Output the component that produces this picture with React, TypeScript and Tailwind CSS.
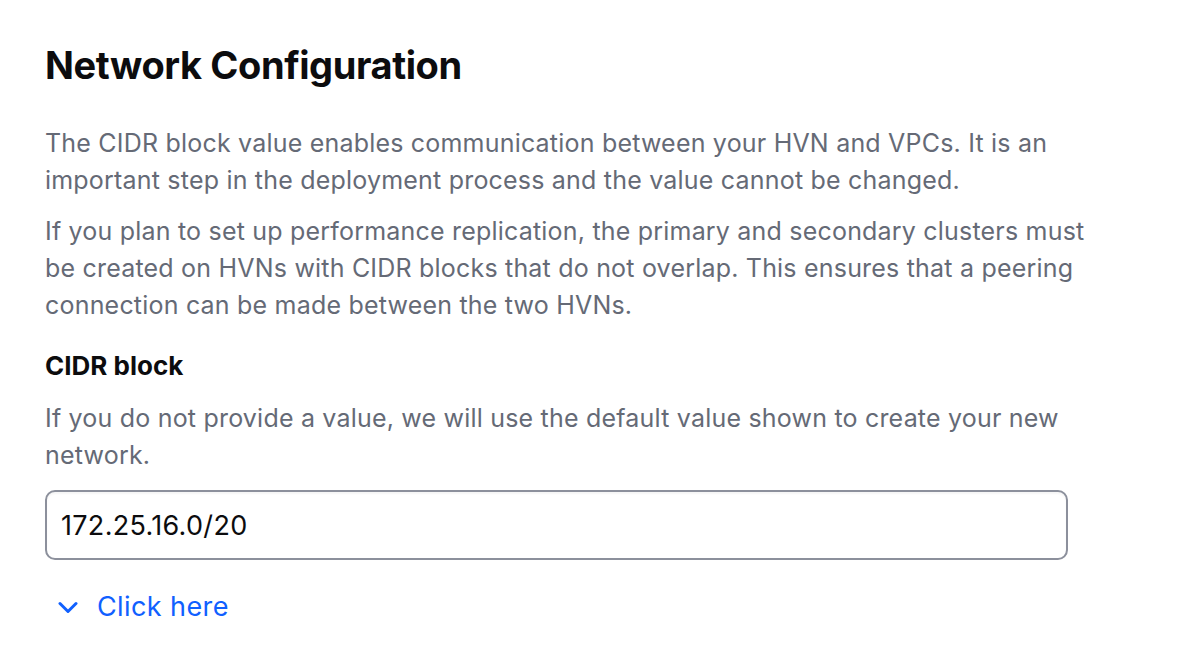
export default function App() {
  return (
    <div className="min-h-screen bg-white px-[45px] pt-[42px] font-['Inter','Liberation_Sans',sans-serif] text-[#0c0c0e]">
      <h1 className="text-[38px] font-bold leading-[46px] tracking-[-0.4px]">Network Configuration</h1>

      <div className="mt-[37px] flex w-[1120px] flex-col gap-[14px] text-[25px] leading-[37px] tracking-[0.2px] text-[#656a76]">
        <p>
          The CIDR block value enables communication between your HVN and VPCs. It is an
          <br />
          important step in the deployment process and the value cannot be changed.
        </p>
        <p>
          If you plan to set up performance replication, the primary and secondary clusters must
          <br />
          be created on HVNs with CIDR blocks that do not overlap. This ensures that a peering
          <br />
          connection can be made between the two HVNs.
        </p>
      </div>

      <h2 className="mt-[25px] text-[26px] font-bold leading-[34px]">CIDR block</h2>
      <p className="mt-[17px] w-[1120px] text-[25px] leading-[37px] tracking-[0.2px] text-[#656a76]">
        If you do not provide a value, we will use the default value shown to create your new
        <br />
        network.
      </p>

      <input
        type="text"
        defaultValue="172.25.16.0/20"
        className="mt-[16px] block h-[70px] w-[1023px] rounded-[10px] border-2 border-[#8c909c] bg-white px-[14px] text-[27px] tracking-[0.3px] text-[#0c0c0e] shadow-[inset_0_2px_2px_rgba(0,0,0,0.04)] outline-none"
      />

      <button className="mt-[30px] flex items-center gap-[19px] pl-[13px] text-[27px] leading-[34px] tracking-[0.4px] text-[#1060ff]">
        <svg width="20" height="13" viewBox="0 0 20 13" fill="none" aria-hidden="true">
          <path d="M2 2.5L10 10.5L18 2.5" stroke="currentColor" strokeWidth="3" strokeLinecap="round" strokeLinejoin="round" />
        </svg>
        <span>Click here</span>
      </button>
    </div>
  );
}
